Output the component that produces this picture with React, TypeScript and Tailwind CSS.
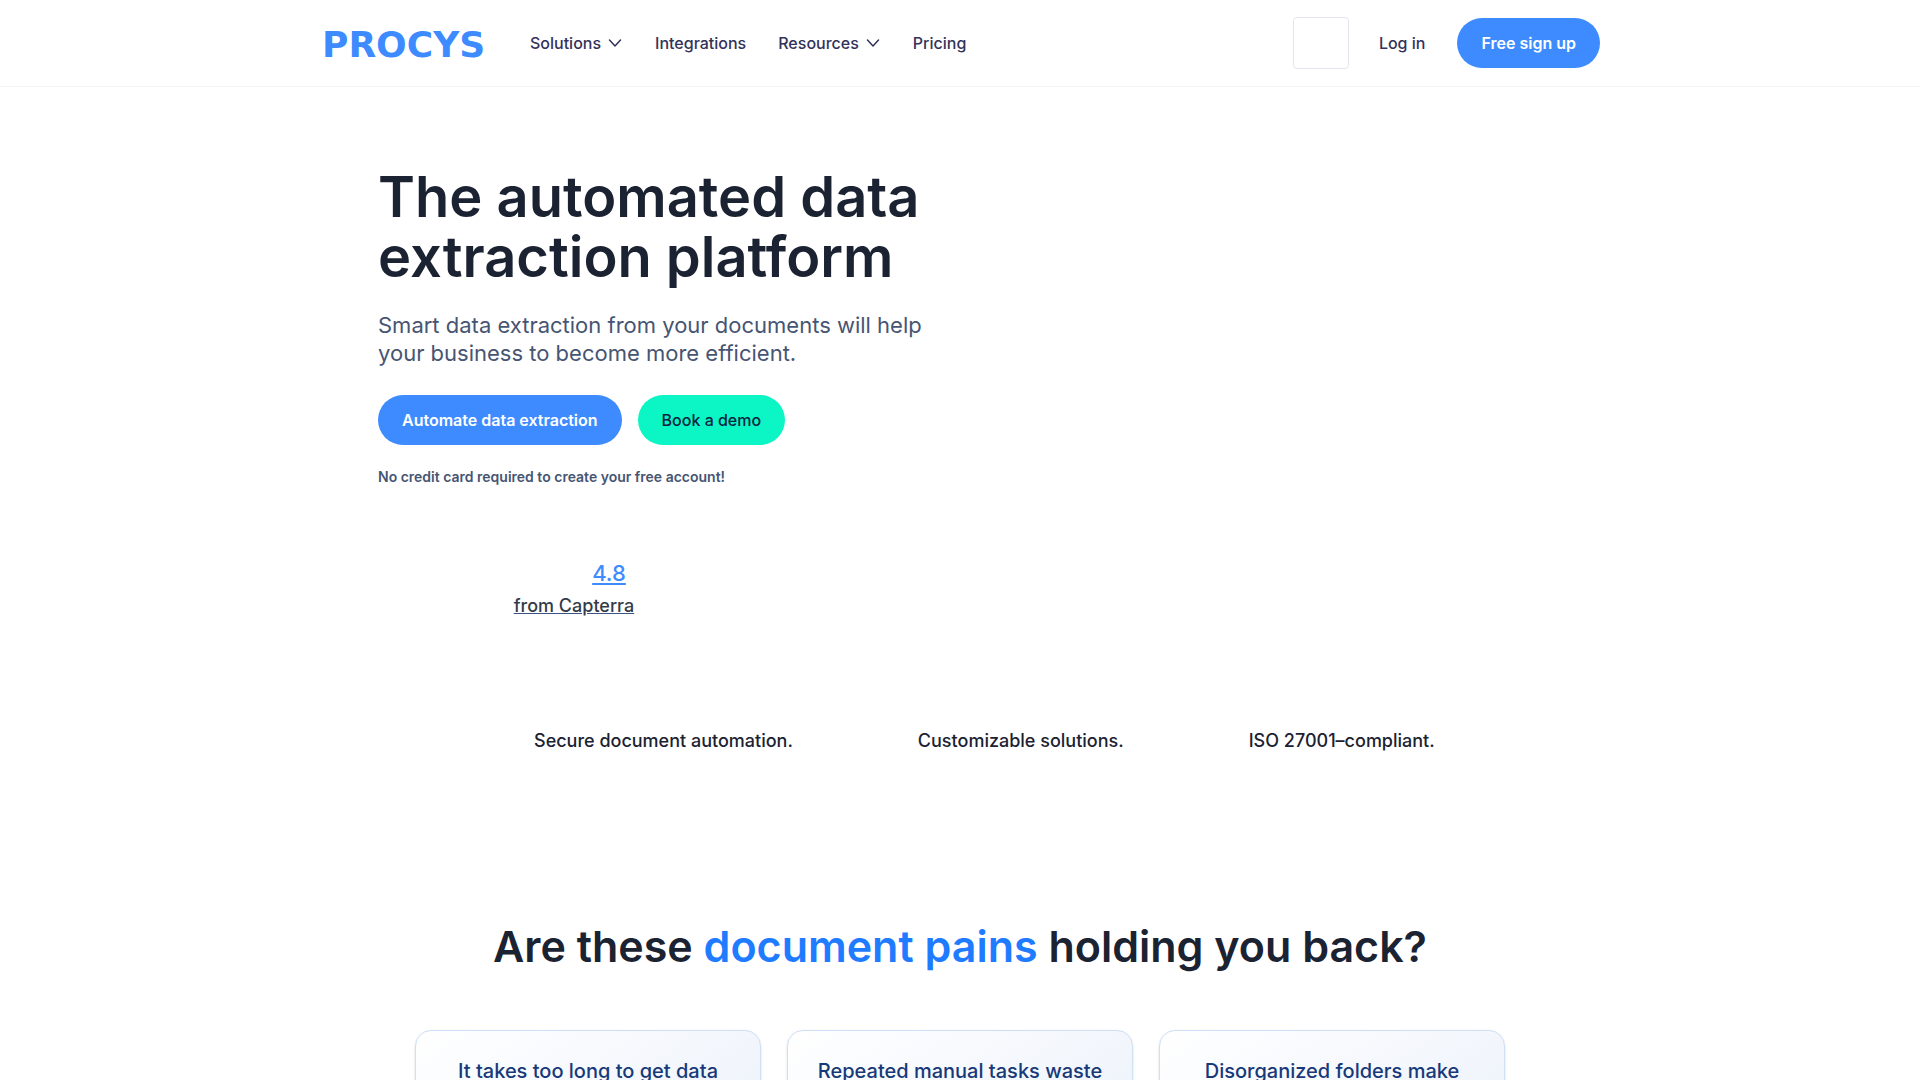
const navItems = [
  { label: "Solutions", hasMenu: true },
  { label: "Integrations", hasMenu: false },
  { label: "Resources", hasMenu: true },
  { label: "Pricing", hasMenu: false },
];

const features = [
  "Secure document automation.",
  "Customizable solutions.",
  "ISO 27001–compliant.",
];

const pains = [
  "It takes too long to get data",
  "Repeated manual tasks waste",
  "Disorganized folders make",
];

function Chevron() {
  return (
    <svg
      viewBox="0 0 16 16"
      className="size-4"
      fill="none"
      stroke="currentColor"
      strokeWidth="1.5"
      strokeLinecap="round"
      strokeLinejoin="round"
      aria-hidden="true"
    >
      <path d="M2.5 5L8 11L13.5 5" />
    </svg>
  );
}

function Header() {
  return (
    <header className="border-b border-gray-100">
      <div className="mx-auto flex h-[86px] max-w-[1280px] items-center">
        <a
          href="#"
          className="w-[210px] pt-1 pl-0.5 font-['DejaVu_Sans',sans-serif] text-[36px] leading-10 font-bold text-[#3d8bff]"
        >
          PROCYS
        </a>
        <nav className="flex items-center gap-8 text-base font-medium text-[#33325a]">
          {navItems.map((item) =>
            item.hasMenu ? (
              <button key={item.label} className="flex items-center gap-1.5">
                {item.label}
                <Chevron />
              </button>
            ) : (
              <a key={item.label} href="#">
                {item.label}
              </a>
            )
          )}
        </nav>
        <div className="ml-auto flex items-center text-base">
          <button
            aria-label="Language"
            className="mr-[30px] h-[52px] w-14 rounded-sm border border-[#e4e6ee]"
          />
          <a href="#" className="mr-8 font-medium text-[#33325a]">
            Log in
          </a>
          <a
            href="#"
            className="rounded-full bg-[#3d8bff] px-6 py-[13px] font-semibold text-white"
          >
            Free sign up
          </a>
        </div>
      </div>
    </header>
  );
}

function Hero() {
  return (
    <section className="mx-auto max-w-[1164px] pt-20">
      <h1 className="max-w-[580px] text-[56px] leading-[60px] font-semibold text-[#1b2231]">
        The automated data extraction platform
      </h1>
      <p className="mt-6 max-w-[560px] text-[22px] leading-7 text-[#475573]">
        Smart data extraction from your documents will help your business to
        become more efficient.
      </p>
      <div className="mt-7 flex gap-4 text-base">
        <a
          href="#"
          className="rounded-full bg-[#3d8bff] px-6 py-[13px] font-semibold text-white"
        >
          Automate data extraction
        </a>
        <a
          href="#"
          className="rounded-full bg-[#0cf5c5] px-6 py-[13px] font-medium text-[#0d2340]"
        >
          Book a demo
        </a>
      </div>
      <p className="mt-[22px] text-sm font-semibold text-[#475573]">
        No credit card required to create your free account!
      </p>
      <div className="mt-[70px] flex w-[392px] flex-col items-center">
        <a
          href="#"
          className="ml-[70px] text-[22px] leading-8 font-medium text-[#3d8bff] underline"
        >
          4.8
        </a>
        <a
          href="#"
          className="text-lg leading-[34px] font-medium text-[#333b49] underline decoration-[#3d5382]"
        >
          from Capterra
        </a>
      </div>
    </section>
  );
}

function Features() {
  return (
    <ul className="mx-auto mt-[104px] flex max-w-[1164px] gap-[125px] pl-[156px] text-lg font-medium text-[#1b2231]">
      {features.map((feature) => (
        <li key={feature}>{feature}</li>
      ))}
    </ul>
  );
}

function Pains() {
  return (
    <section className="mt-[161px]">
      <h2 className="text-center text-[43px] leading-[60px] font-semibold text-[#1b2231]">
        Are these <span className="text-[#1f7bff]">document pains</span> holding
        you back?
      </h2>
      <div className="mx-auto mt-[54px] grid max-w-[1090px] grid-cols-3 gap-[26px]">
        {pains.map((pain) => (
          <article
            key={pain}
            className="h-60 rounded-2xl border border-[#cfdff5] bg-linear-to-br from-white to-[#e6edf9] px-6 pt-[26px] text-center shadow-sm"
          >
            <h3 className="text-xl font-medium text-[#17397a]">{pain}</h3>
          </article>
        ))}
      </div>
    </section>
  );
}

export default function App() {
  return (
    <div className="h-screen overflow-hidden bg-white font-[Inter,sans-serif]">
      <Header />
      <main>
        <Hero />
        <Features />
        <Pains />
      </main>
    </div>
  );
}
